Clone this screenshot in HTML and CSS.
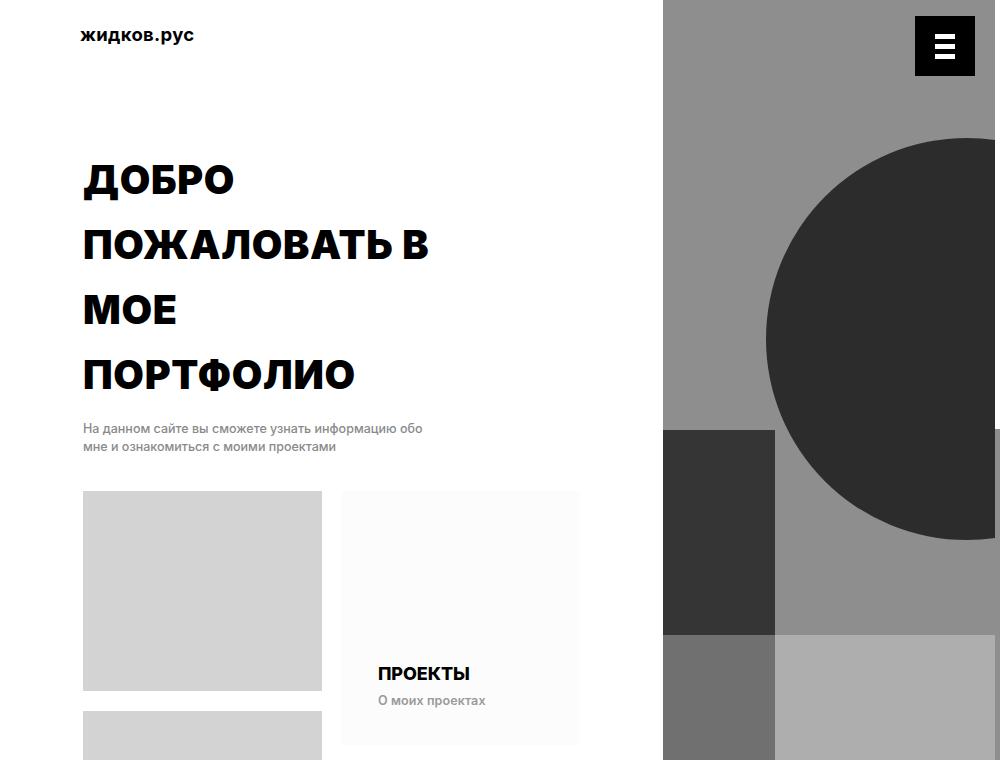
FILE: index.html
```html
<!DOCTYPE html>
<html lang="ru">
<head>
<meta charset="utf-8">
<title>жидков.рус</title>
<link rel="stylesheet" href="styles.css">
</head>
<body>
<div class="page">
  <div class="left">
    <header class="logo">жидков.рус</header>
    <section class="hero">
      <h1 class="title">ДОБРО<br>ПОЖАЛОВАТЬ В<br>МОЕ<br>ПОРТФОЛИО</h1>
      <p class="lead">На данном сайте вы сможете узнать информацию обо мне и ознакомиться с моими проектами</p>
      <div class="cards">
        <div class="col">
          <div class="card card-gray"></div>
          <div class="card card-gray"></div>
        </div>
        <div class="card card-projects">
          <div class="card-title">ПРОЕКТЫ</div>
          <div class="card-sub">О моих проектах</div>
        </div>
      </div>
    </section>
  </div>
  <aside class="panel">
    <div class="cell cell-top"></div>
    <div class="cell cell-dark"></div>
    <div class="cell cell-mid"></div>
    <div class="cell cell-dim"></div>
    <div class="cell cell-light"></div>
    <div class="circle"></div>
    <button class="burger" aria-label="menu">
      <span></span><span></span><span></span>
    </button>
  </aside>
  <div class="strip"><div class="strip-top"></div></div>
</div>
</body>
</html>
```
FILE: styles.css
```css
* { box-sizing: border-box; }
html, body { margin: 0; padding: 0; background: #fff; }
body { font-family: "Inter", "Open Sans", sans-serif; color: #000; overflow: hidden; }
.page { display: flex; width: 1000px; height: 760px; }
.left { width: 663px; flex: none; padding-left: 80px; overflow: hidden; }
.logo { margin-top: 22px; font-size: 18.5px; line-height: 24px; font-weight: 700; letter-spacing: 0.3px; }
.hero { padding-left: 3px; }
.title { margin: 102px 0 0; font-size: 39.5px; line-height: 65px; font-weight: 900; letter-spacing: 0.7px; }
.lead { margin: 12px 0 0; width: 350px; font-size: 12.5px; line-height: 18px; color: #8a8a8a; font-weight: 500; }
.cards { margin-top: 35px; display: grid; grid-template-columns: 239px 238px; column-gap: 20px; align-items: start; }
.col { display: flex; flex-direction: column; gap: 20px; }
.card-gray { background: #d3d3d3; height: 200px; }
.card-projects { background: #fcfcfc; height: 254px; display: flex; flex-direction: column; justify-content: flex-end; padding: 0 36px 35px; }
.card-title { font-size: 18px; line-height: 22px; font-weight: 800; letter-spacing: -0.1px; }
.card-sub { margin-top: 7px; font-size: 12.5px; line-height: 18px; color: #9a9a9a; font-weight: 600; letter-spacing: 0.1px; }
.panel { position: relative; width: 332px; flex: none; height: 760px; background: #8e8e8e; overflow: hidden;
  display: grid; grid-template-columns: 112px 1fr; grid-template-rows: 430px 205px 1fr; }
.cell-top { grid-column: 1 / 3; }
.cell-dark { background: #353535; }
.cell-dim { background: #707070; }
.cell-light { background: #aeaeae; }
.circle { position: absolute; left: 103px; top: 138px; width: 402px; height: 402px; border-radius: 50%; background: #2c2c2c; }
.burger { position: absolute; top: 16px; right: 20px; width: 60px; height: 60px; background: #000; border: 0; padding: 0;
  display: flex; flex-direction: column; align-items: center; justify-content: center; gap: 5px; }
.burger span { display: block; width: 20px; height: 5px; background: #fff; }
.strip { width: 5px; flex: none; background: #8e8e8e; }
.strip-top { height: 429px; background: #fff; }
```
